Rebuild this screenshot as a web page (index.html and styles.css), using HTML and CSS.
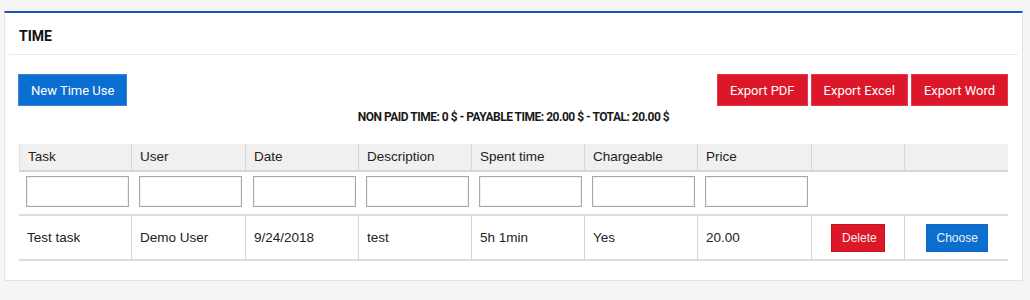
FILE: index.html
```html
<!DOCTYPE html>
<html lang="en">
<head>
<meta charset="utf-8">
<title>Time</title>
<link rel="stylesheet" href="styles.css">
</head>
<body>
<div class="page">
  <section class="card">
    <header class="card-head">
      <h2 class="card-title">TIME</h2>
    </header>
    <div class="card-body">
      <div class="toolbar">
        <button class="btn btn-blue">New Time Use</button>
        <div class="exports">
          <button class="btn btn-red">Export PDF</button>
          <button class="btn btn-red">Export Excel</button>
          <button class="btn btn-red">Export Word</button>
        </div>
      </div>
      <p class="summary">NON PAID TIME: 0 $ - PAYABLE TIME: 20.00 $ - TOTAL: 20.00 $</p>
      <table class="grid">
        <colgroup>
          <col class="c1"><col class="c2"><col class="c3"><col class="c4"><col class="c5"><col class="c6"><col class="c7"><col class="c8"><col class="c9">
        </colgroup>
        <thead>
          <tr class="head-row">
            <th>Task</th><th>User</th><th>Date</th><th>Description</th><th>Spent time</th><th>Chargeable</th><th>Price</th><th></th><th></th>
          </tr>
          <tr class="filter-row">
            <td><input type="text"></td>
            <td><input type="text"></td>
            <td><input type="text"></td>
            <td><input type="text"></td>
            <td><input type="text"></td>
            <td><input type="text"></td>
            <td><input type="text"></td>
            <td></td>
            <td></td>
          </tr>
        </thead>
        <tbody>
          <tr class="data-row">
            <td>Test task</td>
            <td>Demo User</td>
            <td>9/24/2018</td>
            <td>test</td>
            <td>5h 1min</td>
            <td>Yes</td>
            <td>20.00</td>
            <td class="act"><button class="sbtn sbtn-red">Delete</button></td>
            <td class="act"><button class="sbtn sbtn-blue">Choose</button></td>
          </tr>
        </tbody>
      </table>
    </div>
  </section>
</div>
</body>
</html>
```

FILE: styles.css
```css
html, body {
  margin: 0;
  padding: 0;
  background: #f6f5f6;
}

.page {
  padding: 11px 7px 0 4px;
}

.card {
  background: #ffffff;
  border: 1px solid #e2e3e8;
  border-top: 2px solid #1f52bd;
}

.card-head {
  margin: 0 4px;
  padding: 6px 0 0 10px;
  height: 35px;
  border-bottom: 1px solid #e8eaef;
}

.card-title {
  margin: 0;
  font-family: Roboto, "Liberation Sans", sans-serif;
  font-weight: 700;
  font-size: 14px;
  line-height: 35px;
  color: #111111;
}

.card-body {
  padding: 19px 14px 19px 14px;
}

.toolbar {
  display: flex;
  justify-content: space-between;
  align-items: center;
  height: 32px;
}

.exports {
  display: flex;
  gap: 3px;
}

.btn {
  height: 32px;
  padding: 0 12px;
  margin: 0;
  font-family: Roboto, "Liberation Sans", sans-serif;
  font-size: 13px;
  color: #ffffff;
  border: 1px solid transparent;
  border-radius: 0;
  cursor: pointer;
}

.btn-blue {
  background: #0b6fd2;
  border-color: #3b83d6;
  margin-left: -1px;
  padding: 0 12px;
}

.btn-red {
  background: #dc1729;
  border-color: #e23d4b;
}

.summary {
  margin: 3px 0 0 0;
  height: 16px;
  line-height: 16px;
  text-align: center;
  font-family: Roboto, "Liberation Sans", sans-serif;
  font-weight: 700;
  font-size: 12px;
  letter-spacing: -0.5px;
  color: #1a1a1a;
}

.grid {
  margin-top: 19px;
  width: 989px;
  table-layout: fixed;
  border-collapse: separate;
  border-spacing: 0;
  font-family: "Liberation Sans", Arial, sans-serif;
  font-size: 13.5px;
  color: #222222;
}

.c1 { width: 113px; }
.c2 { width: 114px; }
.c3 { width: 113px; }
.c4 { width: 113px; }
.c5 { width: 113px; }
.c6 { width: 113px; }
.c7 { width: 114px; }
.c8 { width: 93px; }
.c9 { width: 103px; }

.head-row th {
  background: #f0f0f0;
  font-weight: 400;
  text-align: left;
  padding: 0 8px;
  line-height: 26px;
  border-bottom: 2px solid #d6d6d6;
  border-right: 1px solid #d6d6d6;
}

.head-row th:first-child {
  border-left: 1px solid #e0e0e0;
}

.head-row th:last-child {
  border-right: 0;
}

.filter-row td {
  padding: 4px 2px 7px 7px;
  border-bottom: 2px solid #dedede;
}

.filter-row input {
  display: block;
  box-sizing: border-box;
  width: 103px;
  height: 31px;
  margin: 0;
  padding: 0 4px;
  border: 1px solid #a8a8a8;
  border-radius: 0;
  background: #ffffff;
  box-shadow: inset 0 0 0 1px #f2f2f2;
}

.data-row td {
  padding: 0 8px;
  height: 43px;
  line-height: 20px;
  border-bottom: 2px solid #dcdcdc;
  border-right: 1px solid #d6d6d6;
}

.data-row td:last-child {
  border-right: 0;
}

.data-row td.act {
  text-align: center;
  padding: 0;
}

.sbtn {
  height: 28px;
  margin: 0;
  padding: 0 10px;
  font-family: "Liberation Sans", Arial, sans-serif;
  font-size: 12px;
  color: #f4eeee;
  border: 1px solid transparent;
  border-radius: 0;
  vertical-align: middle;
  cursor: pointer;
}

.sbtn-red {
  width: 54px;
  background: #dc1729;
  border-color: #c8101f;
}

.sbtn-blue {
  width: 62px;
  background: #0b6fd2;
  border-color: #1a62c2;
}
```
